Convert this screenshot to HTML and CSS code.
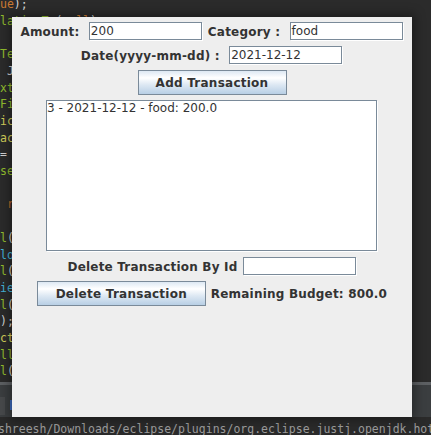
FILE: index.html
```html
<!DOCTYPE html>
<html>
<head>
<meta charset="utf-8">
<link rel="stylesheet" href="styles.css">
</head>
<body>
<div class="ide">
  <div class="editor">
<pre class="code"><span class="o">ue</span><span class="w">);</span>
<span class="g">lativeTo</span><span class="w">(</span><span class="o">null</span><span class="w">);</span>

<span class="g">Te</span>
 <span class="w">J</span>
<span class="g">xt</span>
<span class="g">Fi</span>
<span class="y">ic</span>
<span class="y">ac</span>
<span class="w">=</span>
<span class="g">se</span>

 <span class="r">r</span>

<span class="g">l</span><span class="w">(</span>
<span class="c">lo</span>
<span class="g">l</span><span class="w">(</span>
<span class="c">ie</span>
<span class="g">l</span><span class="w">(</span>
<span class="w">);</span>
<span class="y">ct</span>
<span class="g">ll</span>
<span class="g">l</span><span class="w">(</span></pre>
  </div>
  <div class="sep"></div>
  <div class="console">
    <span class="tab-edge"></span>
    <span class="tab-icon"></span>
  </div>
  <div class="status">shreesh/Downloads/eclipse/plugins/org.eclipse.justj.openjdk.hot</div>
</div>

<div class="frame">
  <div class="row">
    <span class="lbl">Amount: </span>
    <div class="field">200</div>
    <span class="lbl">Category : </span>
    <div class="field">food</div>
  </div>
  <div class="row">
    <span class="lbl">Date(yyyy-mm-dd) : </span>
    <div class="field">2021-12-12</div>
  </div>
  <div class="row row-btn">
    <div class="btn btn-add">Add Transaction</div>
  </div>
  <div class="area">3 - 2021-12-12 - food: 200.0</div>
  <div class="row">
    <span class="lbl">Delete Transaction By Id</span>
    <div class="field"></div>
  </div>
  <div class="row row-btn">
    <div class="btn btn-del">Delete Transaction</div>
    <span class="lbl">Remaining Budget: 800.0</span>
  </div>
</div>
</body>
</html>
```

FILE: styles.css
```css
html, body {
  margin: 0;
  padding: 0;
}
body {
  width: 431px;
  height: 435px;
  overflow: hidden;
  position: relative;
  background: #2b2b2b;
  font-family: "DejaVu Sans Mono", monospace;
}
.ide {
  display: flex;
  flex-direction: column;
  height: 435px;
}
.editor {
  height: 382px;
  overflow: hidden;
  flex: none;
}
.code {
  margin: -4px 0 0 0;
  font: 11.5px/16.7px "DejaVu Sans Mono", monospace;
  color: #cfcfcf;
  white-space: pre;
}
.code .o { color: #cc7a32; }
.code .r { color: #b8692a; }
.code .g { color: #93be2e; }
.code .y { color: #d4cf5a; }
.code .c { color: #45b4d8; }
.code .w { color: #d2d2d2; }
.sep {
  height: 3px;
  background: #5d6063;
  flex: none;
}
.console {
  height: 32px;
  background: #3b3e40;
  flex: none;
  display: flex;
  align-items: flex-start;
  padding-top: 12px;
  box-sizing: border-box;
}
.tab-edge {
  width: 5px;
  height: 18px;
  background: #47494b;
  margin-right: 5px;
}
.tab-icon {
  width: 4px;
  height: 10px;
  margin-top: 3px;
  background: #3d6cc0;
}
.status {
  height: 18px;
  box-sizing: border-box;
  padding-top: 3px;
  background: #2a2a2a;
  color: #9c9c9c;
  font: 11.5px/18px "DejaVu Sans Mono", monospace;
  white-space: nowrap;
  overflow: hidden;
  margin-left: -2px;
  flex: none;
}

/* Swing frame */
.frame {
  position: absolute;
  left: 12px;
  top: 17px;
  width: 400px;
  height: 400px;
  box-sizing: border-box;
  padding-top: 5px;
  background: #eeeeee;
  box-shadow: 0 0 10px 3px rgba(0, 0, 0, 0.35);
  display: flex;
  flex-direction: column;
  align-items: center;
  gap: 5px;
  font: 12px "DejaVu Sans", sans-serif;
  color: #333333;
}
.row {
  display: flex;
  align-items: center;
  gap: 5px;
  height: 19px;
}
.row-btn {
  height: 25px;
}
.lbl {
  font-weight: bold;
  white-space: pre;
  letter-spacing: 0.2px;
}
.field {
  width: 113px;
  height: 18px;
  box-sizing: border-box;
  border: 1px solid #7a8a99;
  background: #ffffff;
  box-shadow: 1px 1px 0 #ffffff;
  margin: 0 1px 1px 0;
  padding: 0 1px;
  line-height: 16px;
  white-space: nowrap;
  overflow: hidden;
}
.btn {
  height: 25px;
  box-sizing: border-box;
  border: 1px solid #7a8a99;
  background: linear-gradient(#dde8f3 0%, #ffffff 30%, #dde8f3 60%, #b8cfe5 100%);
  font-weight: bold;
  letter-spacing: 0.25px;
  display: flex;
  align-items: center;
  justify-content: center;
}
.btn-add {
  width: 149px;
}
.btn-del {
  width: 169px;
}
.area {
  width: 331px;
  height: 151px;
  box-sizing: border-box;
  border: 1px solid #7a8a99;
  background: #ffffff;
  box-shadow: 1px 1px 0 #ffffff;
  margin: 0 1px 1px 0;
  line-height: 15px;
  padding: 0;
}
```
